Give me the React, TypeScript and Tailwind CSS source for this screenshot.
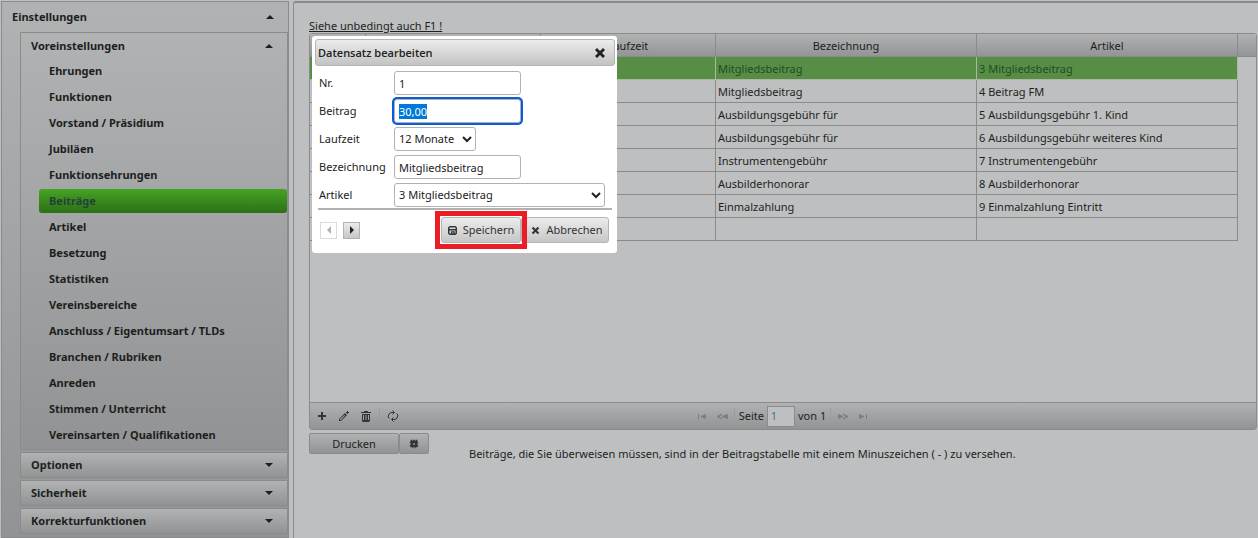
import { ReactNode, useEffect, useRef } from "react";

const menuItems = [
	"Ehrungen",
	"Funktionen",
	"Vorstand / Präsidium",
	"Jubiläen",
	"Funktionsehrungen",
	"Beiträge",
	"Artikel",
	"Besetzung",
	"Statistiken",
	"Vereinsbereiche",
	"Anschluss / Eigentumsart / TLDs",
	"Branchen / Rubriken",
	"Anreden",
	"Stimmen / Unterricht",
	"Vereinsarten / Qualifikationen",
];

const rows = [
	["Mitgliedsbeitrag", "3 Mitgliedsbeitrag"],
	["Mitgliedsbeitrag", "4 Beitrag FM"],
	["Ausbildungsgebühr für", "5 Ausbildungsgebühr 1. Kind"],
	["Ausbildungsgebühr für", "6 Ausbildungsgebühr weiteres Kind"],
	["Instrumentengebühr", "7 Instrumentengebühr"],
	["Ausbilderhonorar", "8 Ausbilderhonorar"],
	["Einmalzahlung", "9 Einmalzahlung Eintritt"],
	["", ""],
];

function Triangle({ up }: { up?: boolean }) {
	return (
		<svg width="8" height="4" viewBox="0 0 8 4" fill="#1c1f20">
			<path d={up ? "M0 4L4 0L8 4Z" : "M0 0L4 4L8 0Z"} />
		</svg>
	);
}

function Glyph({ d, size = 12, fill = "#333638" }: { d: string; size?: number; fill?: string }) {
	return (
		<svg width={size} height={size} viewBox="0 0 12 12" fill={fill} fillRule="evenodd">
			<path d={d} />
		</svg>
	);
}

const CROSS = "M1 3L3 1L6 4L9 1L11 3L8 6L11 9L9 11L6 8L3 11L1 9L4 6Z";
const DISK = "M2 0H10L12 2V10L10 12H2L0 10V2ZM2 2V4H10V2ZM2 6V10H4V7H9V10H10V6ZM6 8H7V10H6Z";
const GEAR = "M2 1H4V2H5V1H7V2H8V1H10V3H11V5H10V7H11V9H10V10H8V11H7V10H5V11H4V10H2V9H1V7H2V5H1V3H2ZM5 5V7H7V5Z";
const PENCIL = "M1 9L7 3L9 5L3 11L1 11ZM2 9V10H3L7 5.5L6.5 5ZM9 1H10V2H11V3H10V4H9V3H8V2H9Z";
const TRASH = "M4 1H8V2H11V3H1V2H4ZM2 4H10V11L9 12H3L2 11ZM3 5V10H4V5ZM5 5V10H7V5H6.5V10H5.5V5ZM8 5V10H9V5Z";

function IconButton({ label, children }: { label: string; children: ReactNode }) {
	return (
		<button aria-label={label} title={label} className="flex h-5 min-w-5 items-center justify-center">
			{children}
		</button>
	);
}

function Sidebar() {
	return (
		<nav className="flex w-[288px] shrink-0 flex-col border border-[#8a8b8d] bg-linear-to-b from-[#b0b2b4] to-[#929395] pb-[2px] font-bold text-[#1c1f20]">
			<button className="flex h-[30px] w-full items-center justify-between pr-[14px] pl-[10px]">
				Einstellungen
				<Triangle up />
			</button>
			<div className="ml-[18px] flex flex-col gap-[2px]">
				<section className="border border-[#8a8b8d] bg-linear-to-b from-[#b0b2b4] to-[#929395]">
					<button className="flex h-[26px] w-full items-center justify-between pr-[14px] pl-[10px]">
						Voreinstellungen
						<Triangle up />
					</button>
					<ul className="pl-[18px]">
						{menuItems.map((item) => (
							<li key={item} className="h-[26px] pb-[2px]">
								<a
									href="#"
									className={
										item === "Beiträge"
											? "block h-6 rounded-[3px] bg-linear-to-b from-[#45a422] to-[#2d7017] pl-[10px] leading-6 text-[#26413c]"
											: "block h-6 pl-[10px] leading-6"
									}
								>
									{item}
								</a>
							</li>
						))}
					</ul>
				</section>
				{["Optionen", "Sicherheit", "Korrekturfunktionen"].map((name) => (
					<button
						key={name}
						className="flex h-[26px] items-center justify-between border border-[#8a8b8d] bg-linear-to-b from-[#b0b2b4] to-[#929395] pr-[14px] pl-[10px]"
					>
						{name}
						<Triangle />
					</button>
				))}
			</div>
		</nav>
	);
}

function DataGrid() {
	return (
		<section className="flex h-[397px] flex-col justify-between rounded-[3px] border border-[#8a8b8d]">
			<div className="bg-[#bdbfc1]">
				<table className="w-full table-fixed border-separate border-spacing-0">
					<colgroup>
						<col className="w-[56px]" />
						<col className="w-[175px]" />
						<col className="w-[175px]" />
						<col />
						<col />
						<col className="w-[18px]" />
					</colgroup>
					<thead>
						<tr className="h-[23px] bg-linear-to-b from-[#b0b2b4] to-[#929395]">
							{["", "", "Laufzeit", "Bezeichnung", "Artikel"].map((h, i) => (
								<th key={i} className="border-r border-b border-[#8a8b8d] p-0 pt-px font-normal">
									{h}
								</th>
							))}
							<td className="border-b border-[#8a8b8d]" />
						</tr>
					</thead>
					<tbody>
						{rows.map((row, i) => (
							<tr key={i} className="h-[23px]">
								{["", "", "", ...row].map((cell, j) => (
									<td
										key={j}
										className={
											i === 0
												? "border-r border-b border-[#a9b8a2] bg-[#588d45] px-[2px] pt-px pb-0 text-[#1d4d25]"
												: "border-r border-b border-[#8a8b8d] px-[2px] pt-px pb-0"
										}
									>
										{cell}
									</td>
								))}
								<td />
							</tr>
						))}
					</tbody>
				</table>
			</div>
			<div className="grid h-[27px] grid-cols-[1fr_auto_1fr] items-center border-t border-[#8a8b8d] bg-linear-to-b from-[#b0b2b4] to-[#929395]">
				<div className="flex items-center gap-[2px] pl-[2px]">
					<IconButton label="Hinzufügen">
						<Glyph d="M5 2H7V5H10V7H7V10H5V7H2V5H5Z" />
					</IconButton>
					<IconButton label="Bearbeiten">
						<Glyph d={PENCIL} />
					</IconButton>
					<IconButton label="Löschen">
						<Glyph d={TRASH} />
					</IconButton>
					<span className="mx-px h-4 w-px bg-[#9a9c9e]" />
					<IconButton label="Neu laden">
						<svg width="12" height="12" viewBox="0 0 12 12" fill="none" stroke="#333638">
							<path d="M2.5 8.5L1 7L2 4L4 2.5H7M5.5 0.5L7.5 2.5L5.5 4.5M9.5 3.5L11 5L10 8L8 9.5H5M6.5 7.5L4.5 9.5L6.5 11.5" />
						</svg>
					</IconButton>
				</div>
				<div className="flex items-center text-[#1c1f20]">
					<IconButton label="Erste Seite">
						<Glyph d="M1 4H2V9H1ZM4 6L9 4V9L4 7Z" fill="#7b7d7f" />
					</IconButton>
					<IconButton label="Vorherige Seite">
						<Glyph d="M0 6L5 3.5V5L2 6.5L5 8V9.5L0 7ZM5 6L11 4V9L5 7Z" fill="#7b7d7f" />
					</IconButton>
					<span className="mr-1 ml-px h-4 w-px bg-[#9a9c9e]" />
					<label htmlFor="page">Seite</label>
					<input
						id="page"
						defaultValue="1"
						className="mx-[3px] h-[21px] w-7 border border-[#8a8b8d] bg-[#bdbfc1] px-[3px] text-[10px] text-[#2e6e9e]"
					/>
					<span>von 1</span>
					<span className="mr-[2px] ml-1 h-4 w-px bg-[#9a9c9e]" />
					<IconButton label="Nächste Seite">
						<Glyph d="M1 4L6 6V7L1 9ZM6 3.5L11 6V7L6 9.5V8L9 6.5L6 5Z" fill="#7b7d7f" />
					</IconButton>
					<IconButton label="Letzte Seite">
						<Glyph d="M2 4L7 6V7L2 9ZM9 4H10V9H9Z" fill="#7b7d7f" />
					</IconButton>
				</div>
			</div>
		</section>
	);
}

function Chevron() {
	return (
		<svg
			className="pointer-events-none absolute top-[9px] right-[4px]"
			width="10"
			height="7"
			viewBox="0 0 10 7"
			fill="none"
			stroke="#222"
			strokeWidth="2"
		>
			<path d="M1 1L5 5L9 1" />
		</svg>
	);
}

const field =
	"h-6 rounded-[3px] border border-[#b2b2b2] bg-white px-[4px] text-[#222] outline-none selection:bg-[#0078d7] selection:text-white";
const softButton =
	"flex h-[26px] items-center justify-center gap-[6px] rounded-[3px] border border-[#b5b5b5] bg-linear-to-b from-[#ececec] to-[#c6c6c6] text-[#333]";

function EditDialog() {
	const amount = useRef<HTMLInputElement>(null);

	useEffect(() => {
		amount.current?.focus();
		amount.current?.select();
	}, []);

	return (
		<div
			role="dialog"
			aria-labelledby="dialog-title"
			className="absolute top-[3px] left-[3px] w-[305px] rounded-[3px] bg-white p-[3px] pr-[2px] pb-[10px] text-[#222]"
		>
			<header className="flex h-[27px] items-center justify-between rounded-[3px] border border-[#b5b5b5] bg-linear-to-b from-[#ececec] to-[#c3c3c3] pr-[8px] pl-[2px]">
				<h2 id="dialog-title" className="font-['Open_Sans',sans-serif] font-semibold">
					Datensatz bearbeiten
				</h2>
				<button aria-label="Schließen">
					<Glyph d={CROSS} fill="#222" />
				</button>
			</header>
			<form className="px-[3px] pt-[5px]">
				<div className="grid grid-cols-[75px_1fr] items-center gap-y-[4px] pl-px">
					<label htmlFor="nr">Nr.</label>
					<input id="nr" defaultValue="1" className={`${field} w-[127px]`} />
					<label htmlFor="beitrag">Beitrag</label>
					<input
						id="beitrag"
						ref={amount}
						defaultValue="30,00"
						className={`${field} w-[127px] ring-2 ring-[#0b5cd8]`}
					/>
					<label htmlFor="laufzeit">Laufzeit</label>
					<div className="relative w-[82px]">
						<select id="laufzeit" className={`${field} w-full appearance-none`}>
							<option>12 Monate</option>
						</select>
						<Chevron />
					</div>
					<label htmlFor="bezeichnung">Bezeichnung</label>
					<input id="bezeichnung" defaultValue="Mitgliedsbeitrag" className={`${field} w-[127px]`} />
					<label htmlFor="artikel">Artikel</label>
					<div className="relative w-[211px]">
						<select id="artikel" className={`${field} w-full appearance-none`}>
							<option>3 Mitgliedsbeitrag</option>
						</select>
						<Chevron />
					</div>
				</div>
				<hr className="mt-px border-t-2 border-[#b2b2b2]" />
				<div className="flex items-center justify-between pt-[7px] pr-[3px] pl-[2px]">
					<div className="flex gap-[6px]">
						<button
							type="button"
							disabled
							aria-label="Zurück"
							className="flex size-[17px] items-center justify-center border border-[#dcdcdc]"
						>
							<Glyph d="M8 2V10L4 6Z" fill="#b0b0b0" />
						</button>
						<button
							type="button"
							aria-label="Weiter"
							className="flex size-[17px] items-center justify-center border border-[#b2b2b2] bg-linear-to-b from-[#ececec] to-[#c6c6c6]"
						>
							<Glyph d="M4 2V10L8 6Z" fill="#222" />
						</button>
					</div>
					<div className="flex">
						<div className="relative">
							<button type="button" className={`${softButton} w-[80px]`}>
								<Glyph d={DISK} size={9} />
								Speichern
							</button>
							<span className="pointer-events-none absolute -inset-[6px] z-10 border-5 border-[#ec1c24]" />
						</div>
						<button type="button" className={`${softButton} w-[88px] pl-1`}>
							<Glyph d={CROSS} size={9} />
							Abbrechen
						</button>
					</div>
				</div>
			</form>
		</div>
	);
}

export default function App() {
	return (
		<div className="flex min-h-screen gap-1 bg-[#bdbfc1] pt-px pl-px font-['Noto_Sans',sans-serif] text-[11px] leading-4 text-[#1c1f20]">
			<Sidebar />
			<main className="min-w-0 flex-1 rounded-tl-[3px] border-t-2 border-l border-[#8a8b8d] pt-[15px] pr-px pl-[15px]">
				<a href="#" className="block h-[15px] w-fit text-[#1c1f20] underline">
					Siehe unbedingt auch F1 !
				</a>
				<div className="relative">
					<DataGrid />
					<EditDialog />
				</div>
				<div className="flex items-start pt-[3px]">
					<button className="h-[21px] w-[90px] rounded-[2px] border border-[#8a8b8d] bg-linear-to-b from-[#b0b2b4] to-[#929395]">
						Drucken
					</button>
					<button
						aria-label="Einstellungen"
						className="flex h-[21px] w-[30px] items-center justify-center rounded-[2px] border border-[#8a8b8d] bg-linear-to-b from-[#b0b2b4] to-[#929395]"
					>
						<Glyph d={GEAR} size={10} />
					</button>
					<p className="pt-[13px] pl-10">
						Beiträge, die Sie überweisen müssen, sind in der Beitragstabelle mit einem Minuszeichen ( - ) zu versehen.
					</p>
				</div>
			</main>
		</div>
	);
}
